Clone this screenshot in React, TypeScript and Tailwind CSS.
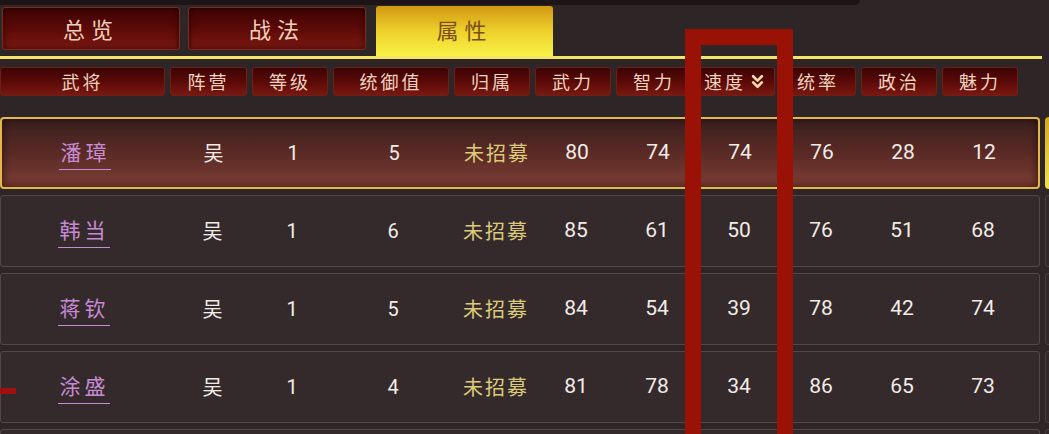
import { ChevronsDown } from 'lucide-react';

const cjk = { fontFamily: '"Noto Sans CJK SC", "Noto Sans", sans-serif' };
const num = { fontFamily: 'Roboto, "Noto Sans", sans-serif' };

const tabs = ['总览', '战法', '属性'];

const columns = ['武将', '阵营', '等级', '统御值', '归属', '武力', '智力', '速度', '统率', '政治', '魅力'];

const gridCols =
  'grid grid-cols-[165px_77px_76px_116px_76px_76px_76px_78px_76px_76px_76px] gap-x-[5px]';

const generals = [
  { name: '潘璋', camp: '吴', level: 1, cost: 5, owner: '未招募', stats: [80, 74, 74, 76, 28, 12] },
  { name: '韩当', camp: '吴', level: 1, cost: 6, owner: '未招募', stats: [85, 61, 50, 76, 51, 68] },
  { name: '蒋钦', camp: '吴', level: 1, cost: 5, owner: '未招募', stats: [84, 54, 39, 78, 42, 74] },
  { name: '涂盛', camp: '吴', level: 1, cost: 4, owner: '未招募', stats: [81, 78, 34, 86, 65, 73] },
];

export default function App() {
  return (
    <div className="relative w-[1049px] h-[434px] overflow-hidden bg-[#2e2527]">
      {/* top shade */}
      <div className="h-[5px] w-[860px] bg-[#1c1416] rounded-br-md" />

      {/* Tabs */}
      <div className="flex items-end gap-[8px] pl-[2px] mt-[1px]">
        {tabs.map((t, i) =>
          i === 2 ? (
            <div
              key={t}
              className="ml-[2px] w-[177px] h-[50px] flex items-center justify-center rounded-t-[3px] bg-gradient-to-b from-[#d29812] via-[#eed02c] to-[#f8f246] text-[#7a4e18] text-[22px] tracking-[6px] pb-[4px]"
              style={cjk}
            >
              {t}
            </div>
          ) : (
            <div
              key={t}
              className="w-[178px] h-[43px] mb-[6px] flex items-center justify-center rounded-[3px] border border-[#7e2a1c] bg-gradient-to-b from-[#3e0404] via-[#5c0a08] to-[#7c1812] text-[#f0d2bc] text-[22px] tracking-[6px] shadow-[inset_0_0_6px_rgba(0,0,0,0.6)]"
              style={cjk}
            >
              {t}
            </div>
          )
        )}
      </div>
      <div className="h-[3px] w-[1042px] bg-[#f4e468]" />

      {/* Header */}
      <div className={`${gridCols} mt-[8px] h-[28px]`}>
        {columns.map((c) => (
          <div
            key={c}
            className="flex items-center justify-center gap-[4px] rounded-[3px] border border-[#6c2016] bg-gradient-to-b from-[#3c0404] via-[#5a0a08] to-[#7a1812] text-[#f0d4c0] text-[18px] tracking-[3px]"
            style={cjk}
          >
            <span>{c}</span>
            {c === '速度' && <ChevronsDown size={21} strokeWidth={3} className="text-[#f2dca8] -ml-[3px]" />}
          </div>
        ))}
      </div>

      {/* Rows */}
      <div className="mt-[22px] flex flex-col gap-[6px]">
        {generals.map((g, i) => {
          const selected = i === 0;
          return (
            <div key={g.name} className="flex gap-[5px]">
              <div
                className={
                  selected
                    ? `${gridCols} w-[1040px] h-[72px] shrink-0 items-center rounded-[4px] border-2 border-[#e6b64a] bg-gradient-to-b from-[#3a201f] via-[#5a2a25] to-[#7c3f35] shadow-[inset_0_0_10px_rgba(20,5,5,0.7)]`
                    : `${gridCols} w-[1040px] h-[72px] shrink-0 items-center rounded-[3px] border border-[#54474a] bg-[#352a2b]`
                }
              >
                <div className="flex justify-center">
                  <span
                    className="text-[#c78bd6] text-[21px] tracking-[4px] border-b border-[#c78bd6] pb-[1px] pl-[2px]"
                    style={cjk}
                  >
                    {g.name}
                  </span>
                </div>
                <div className="text-center text-[#f2ece8] text-[20px] pl-[6px]" style={cjk}>
                  {g.camp}
                </div>
                <div className="text-center text-[#f2ece8] text-[20px] pl-[2px]" style={num}>
                  {g.level}
                </div>
                <div className="text-center text-[#f2ece8] text-[20px] pl-[2px]" style={num}>
                  {g.cost}
                </div>
                <div className="text-center text-[#dccb7a] text-[20px] tracking-[2px] pl-[6px]" style={cjk}>
                  {g.owner}
                </div>
                {g.stats.map((s, j) => (
                  <div key={j} className="text-center text-[#f2ece8] text-[21px] pl-[4px]" style={num}>
                    {s}
                  </div>
                ))}
              </div>
              <div
                className={
                  selected
                    ? 'w-[20px] h-[72px] shrink-0 rounded-[4px] bg-gradient-to-b from-[#d8a81c] to-[#f2e04a]'
                    : 'w-[20px] h-[72px] shrink-0 rounded-[3px] border border-[#4a3e40] bg-[#332829]'
                }
              />
            </div>
          );
        })}
        {/* next row, scrolled below the fold */}
        <div className="flex gap-[5px]">
          <div className="w-[1040px] h-[72px] shrink-0 rounded-[3px] border border-[#54474a] bg-[#352a2b]" />
          <div className="w-[20px] h-[72px] shrink-0 rounded-[3px] border border-[#4a3e40] bg-[#332829]" />
        </div>
      </div>

      {/* red annotation marks */}
      <div className="absolute left-[685px] top-[29px] w-[108px] h-[480px] border-[16px] border-[#9a1106]" />
      <div className="absolute left-0 top-[388px] w-[16px] h-[6px] bg-[#a11010]" />
    </div>
  );
}
